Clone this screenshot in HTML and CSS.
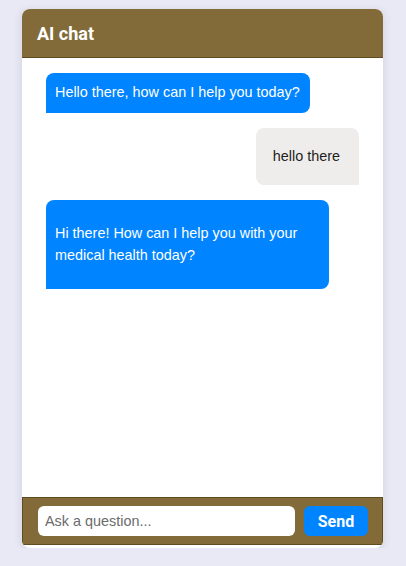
FILE: index.html
```html
<!DOCTYPE html>
<html>
<head>
<meta charset="utf-8">
<link rel="stylesheet" href="styles.css">
</head>
<body>
<div class="card">
  <div class="header"><h2 class="title">AI chat</h2></div>
  <div class="messages">
    <div class="msg bot first">Hello there, how can I help you today?</div>
    <div class="msg user">hello there</div>
    <div class="msg bot long">Hi there! How can I help you with your medical health today?</div>
  </div>
  <div class="footer">
    <input class="ask" type="text" placeholder="Ask a question...">
    <button class="send">Send</button>
  </div>
</div>
</body>
</html>
```
FILE: styles.css
```css
html, body { margin: 0; padding: 0; }
body {
  background: #e8e9f4;
  font-family: "Liberation Sans", Arial, sans-serif;
  font-size: 14.4px;
}
.card {
  width: 361px;
  margin: 9px 0 0 22px;
  background: #fff;
  border-radius: 8px;
  box-shadow: 0 2px 10px rgba(40, 40, 80, 0.12);
  display: flex;
  flex-direction: column;
  padding-bottom: 3px;
  overflow: hidden;
}
.header {
  height: 48px;
  background: #826b38;
  border-bottom: 1px solid #5f4c1f;
  display: flex;
  align-items: center;
  padding: 0 15px;
}
.title {
  margin: 0;
  color: #fff;
  font-family: Roboto, sans-serif;
  font-weight: 700;
  font-size: 18px;
}
.messages {
  height: 439px;
  padding: 15px 24px 0 24px;
  display: flex;
  flex-direction: column;
  gap: 15px;
  box-sizing: border-box;
}
.msg {
  max-width: 283px;
  box-sizing: border-box;
  line-height: 17px;
}
.bot {
  align-self: flex-start;
  background: #0084ff;
  color: #fff;
  border-radius: 8px 8px 8px 0;
}
.first { padding: 11px 10px 12px 9px; }
.long { padding: 22px 10px 23px 9px; line-height: 22px; }
.user {
  align-self: flex-end;
  background: #efedeb;
  color: #1e1e1e;
  border-radius: 8px 8px 0 8px;
  padding: 20px 19px 20px 17px;
}
.footer {
  height: 48px;
  box-sizing: border-box;
  background: #826b38;
  border: 1px solid #5f4c1f;
  display: flex;
  align-items: center;
  gap: 9px;
  padding: 0 14px 0 15px;
}
.ask {
  flex: 1;
  height: 30px;
  box-sizing: border-box;
  border: none;
  border-radius: 6px;
  padding: 0 7px;
  font-family: "Liberation Sans", Arial, sans-serif;
  font-size: 14.4px;
  background: #fff;
  outline: none;
}
.ask::placeholder { color: #6b6b6b; }
.send {
  width: 64px;
  height: 30px;
  border: none;
  border-radius: 6px;
  background: #0084ff;
  color: #fff;
  font-family: Roboto, sans-serif;
  font-weight: 700;
  font-size: 16px;
  padding: 0;
}
```
